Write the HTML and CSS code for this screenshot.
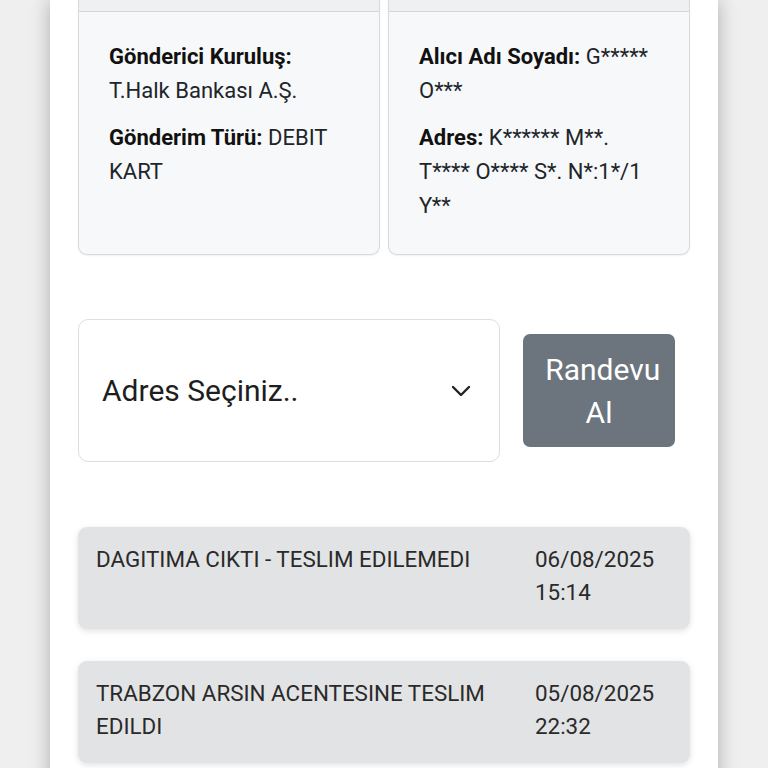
FILE: index.html
```html
<!DOCTYPE html>
<html lang="tr">
<head>
<meta charset="utf-8">
<title>Gönderi Takip</title>
<link rel="stylesheet" href="styles.css">
</head>
<body>
<div class="page">
  <div class="cards">
    <div class="card">
      <div class="card-head"></div>
      <div class="card-body">
        <p><b>Gönderici Kuruluş:</b> T.Halk Bankası A.Ş.</p>
        <p><b>Gönderim Türü:</b> DEBIT KART</p>
      </div>
    </div>
    <div class="card">
      <div class="card-head"></div>
      <div class="card-body">
        <p><b>Alıcı Adı Soyadı:</b> G***** O***</p>
        <p><b>Adres:</b> K****** M**. T**** O**** S*. N*:1*/1 Y**</p>
      </div>
    </div>
  </div>

  <div class="appt">
    <div class="select">
      <span class="select-text">Adres Seçiniz..</span>
      <svg class="chev" width="20" height="12" viewBox="0 0 20 12"><polyline points="2,2 10,10 18,2" fill="none" stroke="#222" stroke-width="2.4" stroke-linecap="round" stroke-linejoin="round"/></svg>
    </div>
    <button class="btn">&nbsp;Randevu Al</button>
  </div>

  <div class="timeline">
    <div class="item">
      <div class="desc">DAGITIMA CIKTI - TESLIM EDILEMEDI</div>
      <div class="date">06/08/2025 15:14</div>
    </div>
    <div class="item">
      <div class="desc">TRABZON ARSIN ACENTESINE TESLIM EDILDI</div>
      <div class="date">05/08/2025 22:32</div>
    </div>
  </div>
</div>
</body>
</html>
```
FILE: styles.css
```css
html, body {
  margin: 0;
  padding: 0;
}
body {
  background: #efefef;
  font-family: Roboto, "Noto Sans", sans-serif;
  color: #212529;
  height: 768px;
  overflow: hidden;
}
.page {
  width: 612px;
  margin: 0 auto;
  padding: 0 28px 40px;
  background: #fff;
  box-shadow: 0 0 18px rgba(0,0,0,0.28);
  min-height: 768px;
}
.cards {
  display: grid;
  grid-template-columns: 1fr 1fr;
  gap: 8px;
}
.card {
  border: 1px solid #d8d9db;
  border-top: none;
  border-radius: 0 0 9px 9px;
  background: #f7f8fa;
  box-shadow: 0 1px 2px rgba(0,0,0,0.06);
}
.card-head {
  height: 11px;
  background: #eef0f2;
  border-bottom: 1px solid #d4d5d7;
}
.card-body {
  padding: 28px 30px 31px;
}
.card-body p {
  margin: 0 0 13px;
  font-size: 22px;
  line-height: 34px;
}
.card-body p:last-child {
  margin-bottom: 0;
}
.card-body b {
  font-weight: 700;
  color: #111;
}
.appt {
  display: flex;
  align-items: center;
  gap: 23px;
  margin-top: 64px;
}
.select {
  flex: 0 0 422px;
  height: 143px;
  box-sizing: border-box;
  border: 1px solid #dedede;
  border-radius: 10px;
  background: #fff;
  display: flex;
  align-items: center;
  justify-content: space-between;
  padding: 0 28px 0 23px;
}
.select-text {
  font-size: 30px;
  color: #1e1e1e;
}
.chev {
  display: block;
}
.btn {
  width: 152px;
  height: 113px;
  border: none;
  border-radius: 7px;
  background: #6c757d;
  color: #fff;
  font-family: Roboto, "Noto Sans", sans-serif;
  font-size: 30px;
  line-height: 43px;
  padding: 0 10px;
}
.timeline {
  margin-top: 65px;
  display: flex;
  flex-direction: column;
  gap: 32px;
}
.item {
  display: flex;
  gap: 20px;
  background: #e2e3e5;
  border-radius: 9px;
  box-shadow: 0 2px 6px rgba(0,0,0,0.12);
  padding: 16px 18px 20px;
  font-size: 22.4px;
  line-height: 33px;
  color: #2a2a2a;
}
.desc {
  flex: 1;
}
.date {
  flex: 0 0 137px;
}
```
